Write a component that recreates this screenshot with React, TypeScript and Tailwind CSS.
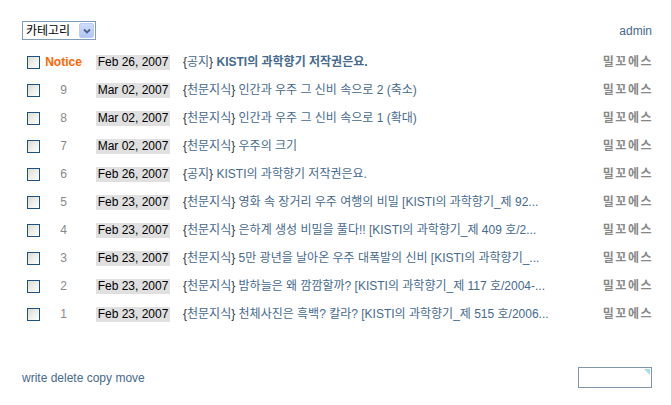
import React from "react";

const rows = [
  { no: "Notice", date: "Feb 26, 2007", cat: "공지", title: "KISTI의 과학향기 저작권은요.", bold: true },
  { no: "9", date: "Mar 02, 2007", cat: "천문지식", title: "인간과 우주 그 신비 속으로 2 (축소)" },
  { no: "8", date: "Mar 02, 2007", cat: "천문지식", title: "인간과 우주 그 신비 속으로 1 (확대)" },
  { no: "7", date: "Mar 02, 2007", cat: "천문지식", title: "우주의 크기" },
  { no: "6", date: "Feb 26, 2007", cat: "공지", title: "KISTI의 과학향기 저작권은요." },
  { no: "5", date: "Feb 23, 2007", cat: "천문지식", title: "영화 속 장거리 우주 여행의 비밀 [KISTI의 과학향기_제 92..." },
  { no: "4", date: "Feb 23, 2007", cat: "천문지식", title: "은하계 생성 비밀을 풀다!! [KISTI의 과학향기_제 409 호/2..." },
  { no: "3", date: "Feb 23, 2007", cat: "천문지식", title: "5만 광년을 날아온 우주 대폭발의 신비 [KISTI의 과학향기_..." },
  { no: "2", date: "Feb 23, 2007", cat: "천문지식", title: "밤하늘은 왜 깜깜할까? [KISTI의 과학향기_제 117 호/2004-..." },
  { no: "1", date: "Feb 23, 2007", cat: "천문지식", title: "천체사진은 흑백? 칼라? [KISTI의 과학향기_제 515 호/2006..." },
];

const font = { fontFamily: '"Liberation Sans", "Noto Sans CJK KR", sans-serif' };

function Checkbox() {
  return (
    <div className="w-[13px] h-[13px] border border-[#1c5180] bg-gradient-to-br from-[#dcdcd5] to-white shrink-0" />
  );
}

export default function App() {
  return (
    <div className="w-[671px] h-[405px] bg-white pl-[22px] pr-[19px] pt-[21px] text-[12px]" style={font}>
      <div className="flex items-center justify-between h-[19px]">
        <div className="flex items-center h-[19px] w-[74px] border border-[#7f9db9] bg-white pl-[3px] pr-[1px]">
          <span className="flex-1 text-[12px] text-black leading-none">카테고리</span>
          <div className="w-[15px] h-[15px] rounded-[2px] bg-gradient-to-b from-[#cfdcfd] to-[#b0c6f5] border border-[#b9cdf8] flex items-center justify-center">
            <svg width="8" height="6" viewBox="0 0 8 6">
              <path d="M1 1.5 L4 4.5 L7 1.5" stroke="#4d6185" strokeWidth="1.8" fill="none" />
            </svg>
          </div>
        </div>
        <span className="text-[#466a8c]">admin</span>
      </div>

      <div className="mt-[8px] flex flex-col">
        {rows.map((r, i) => (
          <div key={i} className="flex items-center h-[28px]">
            <div className="w-[22px] pl-[5px] flex items-center">
              <Checkbox />
            </div>
            <div className={"w-[39px] text-center " + (r.no === "Notice" ? "text-[#ff6600] font-bold" : "text-[#888888]")}>
              {r.no}
            </div>
            <div className="w-[13px]" />
            <div className="w-[74px] h-[15px] bg-[#e0e0e0] text-black flex items-center justify-center whitespace-nowrap">
              {r.date}
            </div>
            <div className="w-[13px]" />
            <div className={"w-[410px] whitespace-nowrap overflow-hidden text-[#466a8c] " + (r.bold ? "font-bold" : "")}>
              <span className="text-[#333333] font-normal">{"{"}</span>
              <span className="font-normal">{r.cat}</span>
              <span className="text-[#333333] font-normal">{"}"}</span> {r.title}
            </div>
            <div className="flex-1 text-right text-[#888888] font-bold whitespace-nowrap tracking-[1.5px] -mr-[1px]">밀꼬에스</div>
          </div>
        ))}
      </div>

      <div className="mt-[39px] flex items-center justify-between">
        <div className="text-[#466a8c]">write delete copy move</div>
        <div className="relative w-[74px] h-[21px] border border-[#7f96ab] bg-white">
          <svg className="absolute right-[1px] top-[1px]" width="6" height="6" viewBox="0 0 6 6">
            <path d="M0 0 H6 V6 Z" fill="#9fe0f5" />
          </svg>
        </div>
      </div>
    </div>
  );
}
